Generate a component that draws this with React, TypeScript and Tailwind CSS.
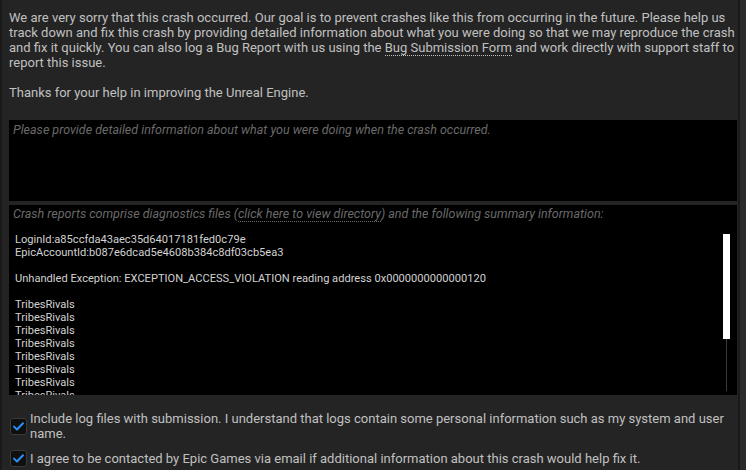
import React from "react";

const Check = () => (
  <div className="w-[17px] h-[17px] shrink-0 rounded-[3px] bg-[#0f0f0f] border border-[#3a3a3a] flex items-center justify-center">
    <svg width="11" height="9" viewBox="0 0 11 9" fill="none">
      <path d="M1 4.6 L4 7.5 L10 1.2" stroke="#2a8ff7" strokeWidth="2" strokeLinecap="round" strokeLinejoin="round" />
    </svg>
  </div>
);

export default function App() {
  const tribes = Array.from({ length: 8 }, () => "TribesRivals");
  return (
    <div className="w-[746px] h-[470px] bg-[#242424] flex overflow-hidden text-[#c0c0c0]" style={{ fontFamily: "Roboto, 'Liberation Sans', sans-serif" }}>
      <div className="w-[2px] bg-[#1a1a1a] shrink-0" />
      <div className="flex-1 flex flex-col pl-[7px] pr-[1px] min-w-0">
        <div className="pt-[10px] text-[13px] leading-[15px]">
          <p>
            We are very sorry that this crash occurred. Our goal is to prevent crashes like this from occurring in the future. Please help us track down and fix this crash by providing detailed information about what you were doing so that we may reproduce the crash and fix it quickly. You can also log a Bug Report with us using the{" "}
            <span className="border-b border-dotted border-[#c0c0c0]">Bug Submission Form</span> and work directly with support staff to report this issue.
          </p>
          <p className="mt-[15px]">Thanks for your help in improving the Unreal Engine.</p>
        </div>
        <div className="mt-[20px] h-[81px] bg-black px-[4px] pt-[2px]">
          <p className="italic text-[12.5px] leading-[15px] text-[#6a6a6a]">
            Please provide detailed information about what you were doing when the crash occurred.
          </p>
        </div>
        <div className="mt-[4px] h-[190px] bg-black flex flex-col overflow-hidden">
          <p className="italic text-[12.5px] leading-[15px] text-[#6a6a6a] px-[4px] pt-[1px]">
            Crash reports comprise diagnostics files (
            <span className="border-b border-dotted border-[#6a6a6a]">click here to view directory</span>
            ) and the following summary information:
          </p>
          <div className="flex flex-1 min-h-0">
            <div className="flex-1 pl-[6px] pt-[12px] text-[11.1px] leading-[13px] text-[#d2d2d2] overflow-hidden">
              <div>LoginId:a85ccfda43aec35d64017181fed0c79e</div>
              <div>EpicAccountId:b087e6dcad5e4608b384c8df03cb5ea3</div>
              <div className="h-[13px]" />
              <div>Unhandled Exception: EXCEPTION_ACCESS_VIOLATION reading address 0x0000000000000120</div>
              <div className="h-[13px]" />
              {tribes.map((t, i) => (
                <div key={i}>{t}</div>
              ))}
            </div>
            <div className="w-[7px] mr-[7px] pt-[13px] flex flex-col items-center pb-[4px]">
              <div className="w-[7px] h-[105px] bg-white" />
              <div className="w-[1px] flex-1 bg-[#3a3a3a]" />
            </div>
          </div>
        </div>
        <div className="mt-[16px] flex items-center gap-[3px] pl-[1px] text-[13px] leading-[15px]">
          <Check />
          <p>Include log files with submission. I understand that logs contain some personal information such as my system and user name.</p>
        </div>
        <div className="mt-[9px] flex items-center gap-[3px] pl-[1px] text-[13px] leading-[15px]">
          <Check />
          <p>I agree to be contacted by Epic Games via email if additional information about this crash would help fix it.</p>
        </div>
      </div>
      <div className="w-[2px] bg-[#1a1a1a] shrink-0" />
      <div className="w-[6px] bg-[#2a2a2a] shrink-0" />
    </div>
  );
}
